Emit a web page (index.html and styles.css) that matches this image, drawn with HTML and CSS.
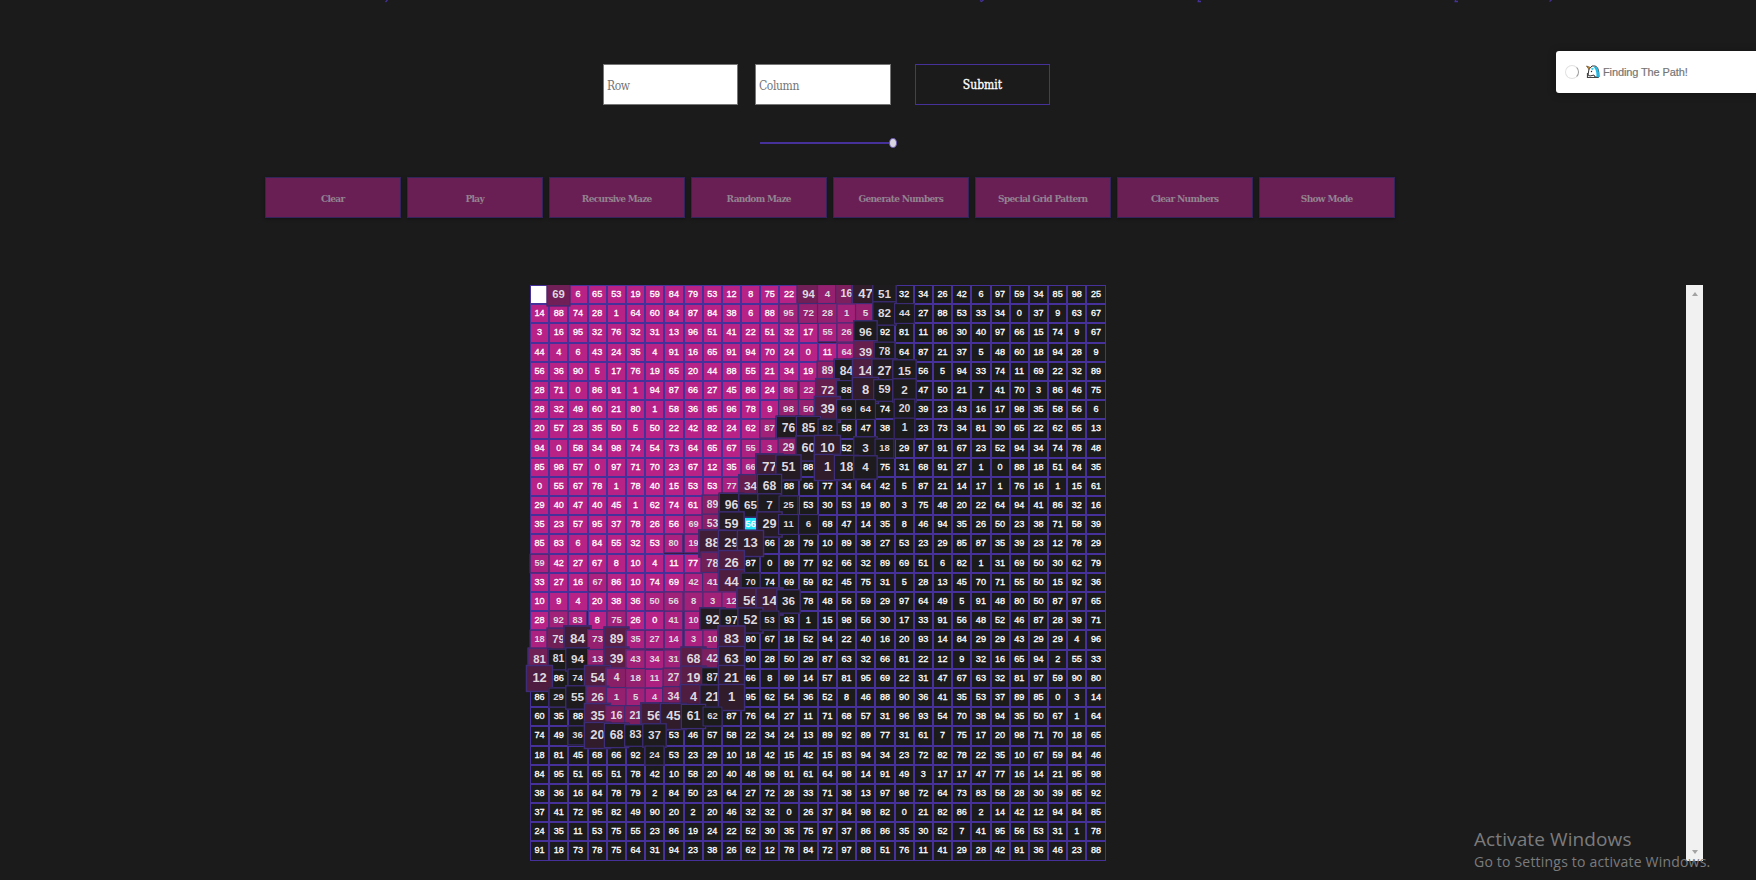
FILE: index.html
```html
<!DOCTYPE html>
<html lang="en">
<head>
<meta charset="utf-8">
<title>Path Finder</title>
<link rel="stylesheet" href="styles.css">
</head>
<body>
<svg class="headline-edge" width="1756" height="3" viewBox="0 0 1756 3"><path d="M385.500 2l2-2M980 .5l1.500 1 2-1.500M1197.500 1.500h3.500M1198.500 0v2M1454.500 1.500h3.500M1455.500 0v2M1549.500 1.500l2-1.500"/></svg>
<form class="size-form" onsubmit="return false">
  <input class="size-input" placeholder="Row">
  <input class="size-input" placeholder="Column">
  <button class="submit">Submit</button>
</form>
<div class="slider"><span class="track"></span><span class="thumb"></span></div>
<nav class="toolbar">
  <button class="tool">Clear</button>
  <button class="tool">Play</button>
  <button class="tool">Recursive Maze</button>
  <button class="tool">Random Maze</button>
  <button class="tool">Generate Numbers</button>
  <button class="tool">Special Grid Pattern</button>
  <button class="tool">Clear Numbers</button>
  <button class="tool">Show Mode</button>
</nav>
<main class="board">
  <div class="grid" id="grid"></div>
  <div class="scrollbar"><i class="up"></i><i class="down"></i></div>
</main>
<aside class="toast">
  <span class="spinner"></span>
  <svg class="unicorn" width="14" height="14" viewBox="0 0 14 14"><path d="M3 4l3-3h3c3 1 4 4 4 11H9l-1-2-4 1-2-1z" fill="#fff" stroke="#333" stroke-width="1"/><path d="M8 1.500c4 0 5 4 5 11h-2.500c0-5 0-7-3-11z" fill="#19b9e8"/><path d="M5 2.500l3 1-2 2z" fill="#35cdf0"/><path d="M.5 1l4 1.500L3 4.500z" fill="#d99a2b" stroke="#5a4630" stroke-width=".7"/><path d="M1.500 8v4.500h11" stroke="#444" fill="none" stroke-width="1.200"/><circle cx="5.500" cy="6.500" r=".7" fill="#222"/></svg>
  <span class="toast-text">Finding The Path!</span>
</aside>
<div class="watermark"><div class="wm-title">Activate Windows</div><div class="wm-sub">Go to Settings to activate Windows.</div></div>
<script src="grid.js"></script>
</body>
</html>
```
FILE: styles.css
```css
* { box-sizing: border-box; }
body { margin: 0; width: 1756px; height: 880px; overflow: hidden; position: relative; background: #1b1b1c; font-family: "DejaVu Serif Condensed", "DejaVu Serif", serif; }
.headline-edge { display: block; fill: none; stroke: #46309a; stroke-width: 1.3; }
.size-form { display: flex; padding: 61px 0 0 603px; }
.size-input { width: 135px; height: 41px; margin-right: 17px; padding: 2px 3px 0; border: 1px solid #767676; border-radius: 0; background: #fff; font: 12px "DejaVu Serif Condensed", serif; letter-spacing: -.4px; }
.size-input + .size-input { width: 136px; margin-right: 24px; }
.size-input::placeholder { color: #757575; }
.submit { width: 135px; height: 41px; padding: 1px 0 0; border: 1px solid #46309a; background: transparent; color: #fff; font: 12px "DejaVu Serif Condensed", serif; letter-spacing: 0; -webkit-text-stroke: .3px #fff; }
.slider { display: flex; align-items: center; height: 12px; margin: 32px 0 0 760px; }
.track { width: 129px; height: 2px; background: #46309a; }
.thumb { width: 8px; height: 10px; border-radius: 50%; background: #d8d5e0; border: 1px solid #6a58ad; }
.toolbar { display: flex; gap: 6.5px; padding: 28px 0 0 265px; }
.tool { width: 135.5px; height: 41px; padding: 2px 0 0; border: 1px solid #31255c; background: #6a1f54; color: #928390; box-shadow: 0 1px 3px rgba(0,0,0,.35); font: bold 10px "DejaVu Serif Condensed", serif; letter-spacing: -.67px; }
.board { display: flex; justify-content: space-between; width: 1173px; margin: 67px 0 0 530px; }
.grid { display: grid; grid-template-columns: repeat(30, 19.2px); grid-auto-rows: 19.2px; clip-path: inset(0 -20px); font: 9.1px/17px "Liberation Sans", Arial, sans-serif; -webkit-text-stroke: .3px; }
.cell { border: 1px solid #46309a; color: #fff; text-align: center; white-space: nowrap; overflow: hidden; }
.done { background: #b82287; }
.start { background: #fff; }
.current { background: #19e6fa; }
.wave { border-color: #3d2c78; color: #ded8df; font-weight: bold; font-size: 9px; line-height: 16.5px; -webkit-text-stroke: 0; }
.scrollbar { display: flex; flex-direction: column; justify-content: space-between; align-items: center; width: 17px; height: 576px; padding: 7px 0; background: #f1f1f1; }
.up, .down { border: 3.5px solid transparent; }
.up { border-bottom: 4px solid #a3a3a3; border-top: 0; }
.down { border-top: 4px solid #a3a3a3; border-bottom: 0; }
.toast { position: absolute; left: 1556px; top: 51px; width: 200px; height: 42px; display: flex; align-items: center; padding-left: 9px; border-radius: 3px 0 0 3px; background: #fff; box-shadow: 0 1px 8px rgba(0,0,0,.3); }
.spinner { width: 14px; height: 14px; border: 1.500px solid #e2e2e2; border-right-color: #999; border-radius: 50%; }
.unicorn { margin-left: 7px; }
.toast-text { margin-left: 3px; color: #757575; font: 11px "Liberation Sans", Arial, sans-serif; letter-spacing: -.12px; -webkit-text-stroke: .2px; }
.watermark { position: absolute; left: 1474px; top: 826px; color: #7b7b7c; font-family: "Open Sans", sans-serif; white-space: nowrap; }
.wm-title { font-size: 19px; line-height: 26px; letter-spacing: .1px; }
.wm-sub { font-size: 14px; line-height: 19px; letter-spacing: .2px; }
```
FILE: grid.js
```js
const values = `0 69 6 65 53 19 59 84 79 53 12 8 75 22 94 4 16 47 51 32 34 26 42 6 97 59 34 85 98 25
14 88 74 28 1 64 60 84 87 84 38 6 88 95 72 28 1 5 82 44 27 88 53 33 34 0 37 9 63 67
3 16 95 32 76 32 31 13 96 51 41 22 51 32 17 55 26 96 92 81 11 86 30 40 97 66 15 74 9 67
44 4 6 43 24 35 4 91 16 65 91 94 70 24 0 11 64 39 78 64 87 21 37 5 48 60 18 94 28 9
56 36 90 5 17 76 19 65 20 44 88 55 21 34 19 89 84 14 27 15 56 5 94 33 74 11 69 22 32 89
28 71 0 86 91 1 94 87 66 27 45 86 24 86 22 72 88 8 59 2 47 50 21 7 41 70 3 86 46 75
28 32 49 60 21 80 1 58 36 85 96 78 9 98 50 39 69 64 74 20 39 23 43 16 17 98 35 58 56 6
20 57 23 35 50 5 50 22 42 82 24 62 87 76 85 82 58 47 38 1 23 73 34 81 30 65 22 62 65 13
94 0 58 34 98 74 54 73 64 65 67 55 3 29 60 10 52 3 18 29 97 91 67 23 52 94 34 74 78 48
85 98 57 0 97 71 70 23 67 12 35 66 77 51 88 1 18 4 75 31 68 91 27 1 0 88 18 51 64 35
0 55 67 78 1 78 40 15 53 53 77 34 68 88 66 77 34 64 42 5 87 21 14 17 1 76 16 1 15 61
29 40 47 40 45 1 62 74 61 89 96 65 7 25 53 30 53 19 80 3 75 48 20 22 64 94 41 86 32 16
35 23 57 95 37 78 26 56 69 53 59 56 29 11 6 68 47 14 35 8 46 94 35 26 50 23 38 71 58 39
85 83 6 84 55 32 53 80 19 88 29 13 66 28 79 10 89 38 27 53 23 29 85 87 35 39 23 12 78 29
59 42 27 67 8 10 4 11 77 78 26 87 0 89 77 92 66 32 89 69 51 6 82 1 31 69 50 30 62 79
33 27 16 67 86 10 74 69 42 41 44 70 74 69 59 82 45 75 31 5 28 13 45 70 71 55 50 15 92 36
10 9 4 20 38 36 50 56 8 3 12 56 14 36 78 48 56 59 29 97 64 49 5 91 48 80 50 87 97 65
28 92 83 8 75 26 0 41 10 92 97 52 53 93 1 15 98 56 30 17 33 91 56 48 52 46 87 28 39 71
18 79 84 73 89 35 27 14 3 10 83 80 67 18 52 94 22 40 16 20 93 14 84 29 29 43 29 29 4 96
81 81 94 13 39 43 34 31 68 42 63 80 28 50 29 87 63 32 66 81 22 12 9 32 16 65 94 2 55 33
12 86 74 54 4 18 11 27 19 87 21 66 8 69 14 57 81 95 69 22 31 47 67 63 32 81 97 59 90 80
86 29 55 26 1 5 4 34 4 21 1 95 62 54 36 52 8 46 88 90 36 41 35 53 37 89 85 0 3 14
60 35 88 35 16 21 56 45 61 62 87 76 64 27 11 71 68 57 31 96 93 54 70 38 94 35 50 67 1 64
74 49 36 20 68 83 37 53 46 57 58 22 34 24 13 89 92 89 77 31 61 7 75 17 20 98 71 70 18 65
18 81 45 68 66 92 24 53 23 29 10 18 42 15 42 15 83 94 34 23 72 82 78 22 35 10 67 59 84 46
84 95 51 65 51 78 42 10 58 20 40 48 98 91 61 64 98 14 91 49 3 17 17 47 77 16 14 21 95 98
38 36 16 84 78 79 2 84 50 23 64 27 72 28 33 71 38 13 97 98 72 64 73 83 58 28 30 39 85 92
37 41 72 95 82 49 90 20 2 20 46 32 32 0 26 37 84 98 82 0 21 82 86 2 14 42 12 94 84 85
24 35 11 53 75 55 23 86 19 24 22 52 30 35 75 97 37 86 86 35 30 52 7 41 95 56 53 31 1 78
91 18 73 78 75 64 31 94 23 38 26 62 12 78 84 72 97 88 51 76 11 41 29 28 42 91 36 46 23 88`.split('\n').map(r => r.split(' '));

// '#' visited, '.' untouched, 'S' start, 'C' current, a-s progress of the visit animation
const states = [
  'Sn############nqoif',
  '#############rqqrqfb',
  '###############srf',
  '################smc',
  '###############pgkhf',
  '#############ssmbidf',
  '#############qqkbb.c',
  '############rgga...c',
  '###########ssphi.fa',
  '###########sjh.igf',
  '##########smg',
  '#########pgffa',
  '########sphChbb',
  '#######ssjii',
  's########nk',
  '###s####sqka',
  '######srrrrjjf',
  '#rs#r##sshfha',
  'snjqlssssrj',
  'ncfqlrsrloi',
  'k.akpqspldi',
  '.afnqrsokhi',
  '...koojiga',
  '..aigdf',
  '......a'
];
const from = [27, 27, 28], to = [184, 34, 135];
const named = { '#': 'done', S: 'start', C: 'current' };
const grid = document.getElementById('grid');
values.forEach((row, r) => row.forEach((value, c) => {
  const cell = document.createElement('div');
  const state = (states[r] || '')[c] || '.';
  cell.className = 'cell ' + (named[state] || '');
  cell.textContent = state === 'S' ? '' : value;
  if (/[a-s]/.test(state)) {
    const t = (state.charCodeAt(0) - 96) * 0.05;
    const mix = t < 0.5 ? 0.25 * (t / 0.5) ** 6 : 0.25 + 0.75 * ((t - 0.5) / 0.5);
    const growth = t < 0.5 ? t : 0.5 * ((1 - t) / 0.5) ** 1.3;
    cell.className = 'cell wave';
    cell.style.transform = `scale(${1 + growth})`;
    cell.style.backgroundColor = `rgb(${from.map((v, i) => Math.round(v + (to[i] - v) * mix))})`;
  }
  grid.append(cell);
}));
```
